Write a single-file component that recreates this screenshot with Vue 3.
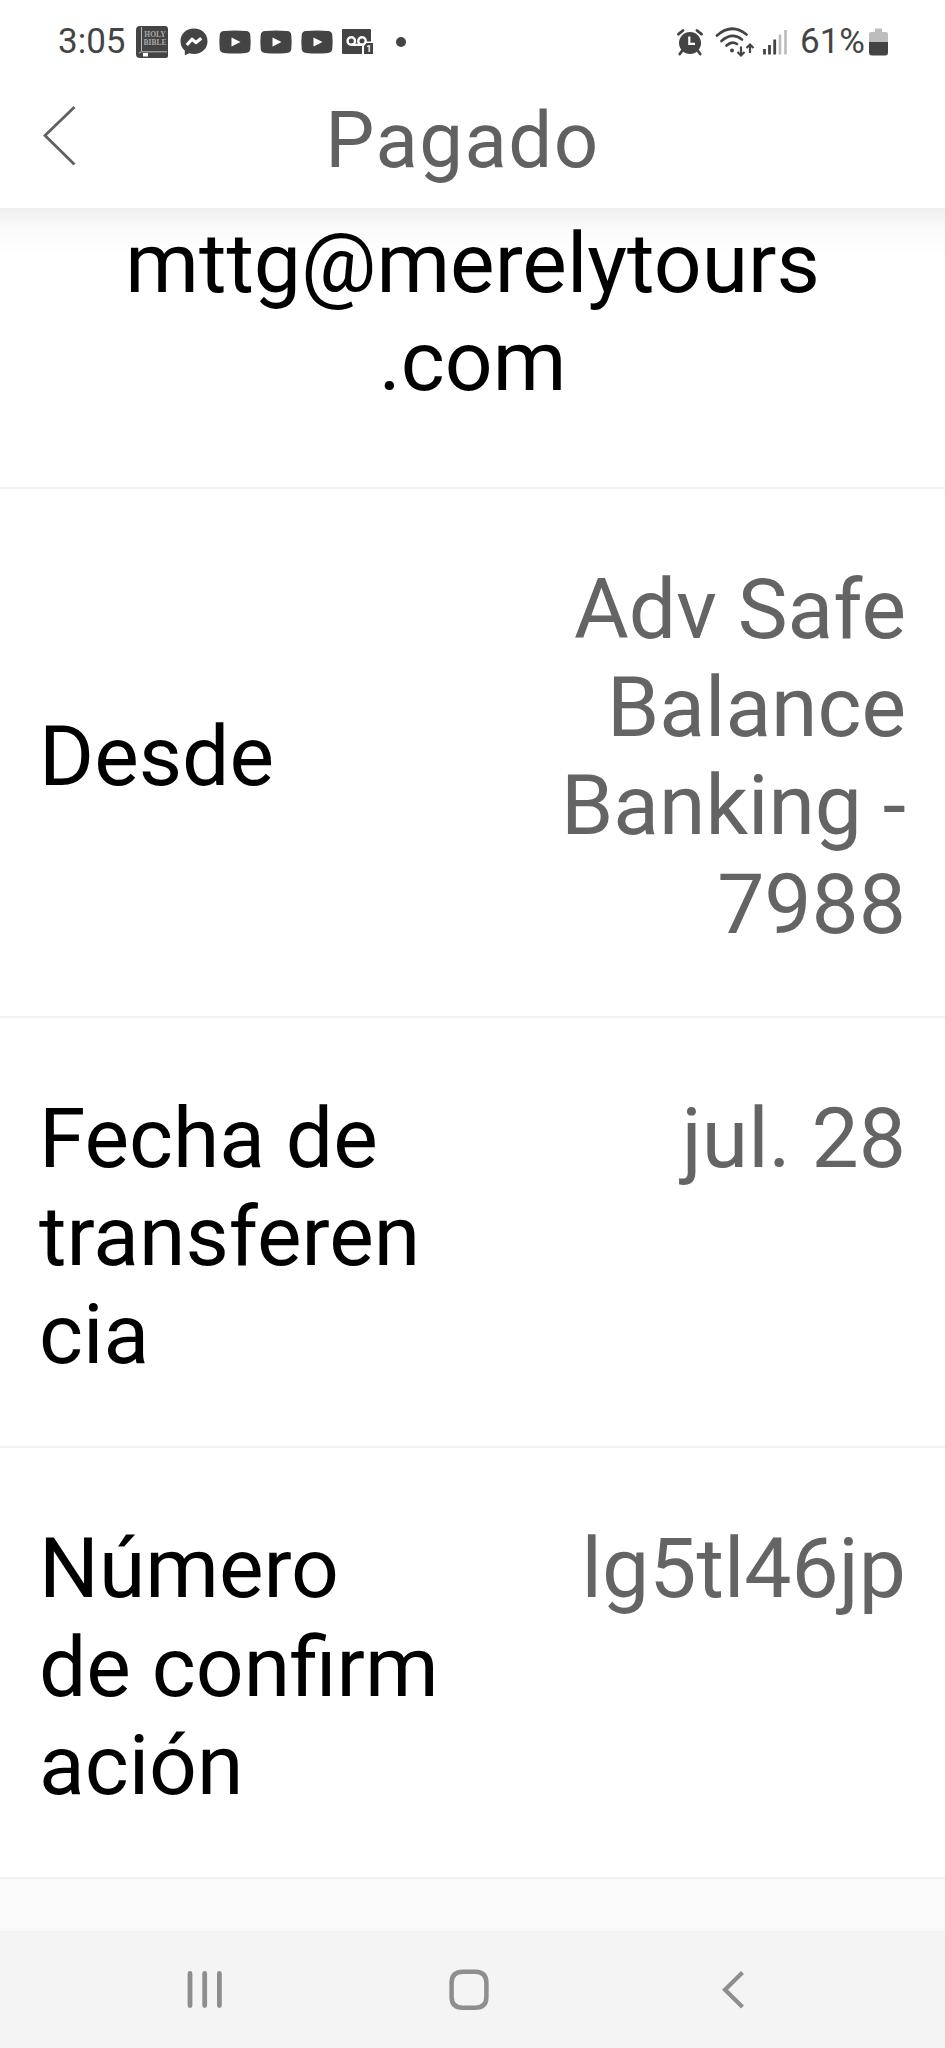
<template>
  <div class="phone">
    <div class="status-bar">
      <span class="clock">3:05</span>
      <div class="status-icons">
        <svg width="32" height="32" viewBox="0 0 32 32">
          <path d="M4 0H29Q32 0 32 3V30Q32 32 30 32H4Q0 32 0 28V4Q0 0 4 0Z" fill="#444" />
          <path d="M5.5 1V25M3 27.5Q3 25.8 6 25.8H31" fill="none" stroke="#bbb" stroke-width="1" />
          <rect x="7" y="27" width="5" height="3.5" fill="#fff" />
          <text x="19" y="11" class="bible-text">HOLY</text>
          <text x="19" y="18.5" class="bible-text">BIBLE</text>
        </svg>
        <svg class="messenger" width="28" height="28" viewBox="0 0 28 28">
          <path d="M14 0.5C6 0.5 0.5 6 0.5 13.2C0.5 17 2 20.2 4.8 22.5V27.2L9.3 25.2C10.8 25.6 12.4 25.9 14 25.9C22 25.9 27.5 20.4 27.5 13.2S22 0.5 14 0.5Z" fill="#444" />
          <path d="M6.8 17L12 11.2L16 14.6L21.3 10.2" fill="none" stroke="#fff" stroke-width="3.2" stroke-linejoin="round" />
        </svg>
        <svg v-for="n in 3" :key="n" class="youtube" width="32" height="24" viewBox="0 0 32 24">
          <path d="M5 1Q16 0 27 1Q31 1.3 31.3 5Q32 12 31.3 19Q31 22.6 27 23Q16 24 5 23Q1 22.6 0.7 19Q0 12 0.7 5Q1 1.3 5 1Z" fill="#444" />
          <path d="M12.5 7.5L21.5 12L12.5 16.5Z" fill="#fff" />
        </svg>
        <svg class="voicemail" width="32" height="26" viewBox="0 0 32 26">
          <rect width="29" height="25" rx="1" fill="#444" />
          <g fill="none" stroke="#fff" stroke-width="2.4">
            <circle cx="9.3" cy="12" r="3.7" />
            <circle cx="20" cy="12" r="3.7" />
            <path d="M9.5 15.8H20" />
          </g>
          <path d="M20 26V15.5L23 12.5H32V26Z" fill="#fff" />
          <path d="M22 25V17L24.5 14H31V25Z" fill="#444" />
          <text x="26.8" y="23.3" class="badge-text">1</text>
        </svg>
        <span class="dot"></span>
      </div>
      <div class="system-icons">
        <svg width="26" height="27" viewBox="0 0 26 27">
          <path d="M1.5 5.2L6 1.5M24.5 5.2L20 1.5M5 22L2.8 25M21 22L23.2 25" stroke="#444" stroke-width="2.8" stroke-linecap="round" />
          <circle cx="13" cy="14" r="11" fill="#444" />
          <path d="M12.3 7.5V14.8H18" fill="none" stroke="#fff" stroke-width="2.2" />
        </svg>
        <svg class="wifi" width="40" height="31" viewBox="0 0 40 31">
          <g fill="none" stroke="#444" stroke-width="2.7" stroke-linecap="round">
            <path d="M2 8.5Q16.5 -4.5 31.5 7.5" />
            <path d="M6.5 14Q17 4.5 27 12.5" />
            <path d="M11.5 18.5Q17 13.5 22 17" />
          </g>
          <circle cx="17" cy="23.5" r="2" fill="#444" />
          <path d="M26 19.5V28M22.5 25L26 28.5L29.5 25M35 26V18M31.5 21L35 17.5L38.5 21" fill="none" stroke="#444" stroke-width="2.2" />
        </svg>
        <svg class="signal" width="25" height="26" viewBox="0 0 25 26">
          <path d="M1.5 20V25.5M6.5 16V25.5M11.7 10.5V25.5" stroke="#444" stroke-width="2.8" />
          <path d="M17 5.5V25.5M22.5 1V25.5" stroke="#bbb" stroke-width="2.6" />
        </svg>
        <span class="percent">61%</span>
        <svg class="battery" width="19" height="28" viewBox="0 0 19 28">
          <path d="M6 0.5H13V4H17Q19 4 19 6V14H0V6Q0 4 2 4H6Z" fill="#bdbdbd" />
          <path d="M0 14H19V24.5Q19 27.5 16 27.5H3Q0 27.5 0 24.5Z" fill="#444" />
        </svg>
      </div>
    </div>

    <header class="header">
      <svg class="back" width="34" height="62" viewBox="0 0 34 62">
        <path d="M31.5 2L2 30.5L31.5 59.5" fill="none" stroke="#616161" stroke-width="2.8" />
      </svg>
      <h1 class="title">Pagado</h1>
    </header>

    <main class="content">
      <div class="email">mttg@merelytours<br />.com</div>
      <div class="row" v-for="r in rows" :key="r.label" :class="{ centered: r.centered }">
        <div class="label">{{ r.label }}</div>
        <div class="value">{{ r.value }}</div>
      </div>
    </main>

    <nav class="nav-bar">
      <svg width="35" height="42" viewBox="0 0 35 42">
        <path d="M3 4.5V36.5M17.7 4.5V36.5M32.4 4.5V36.5" stroke="#8e8e8e" stroke-width="4.8" stroke-linecap="round" />
      </svg>
      <svg class="home" width="40" height="42" viewBox="0 0 40 42">
        <path d="M14 2.8H26Q37.4 2.8 37.4 14V28Q37.4 38.8 26 38.8H14Q2.6 38.8 2.6 28V14Q2.6 2.8 14 2.8Z" fill="none" stroke="#8e8e8e" stroke-width="4.5" />
      </svg>
      <svg class="nav-back" width="23" height="42" viewBox="0 0 23 42">
        <path d="M20.5 3.5L3 20.7L20.5 38" fill="none" stroke="#8e8e8e" stroke-width="4.2" />
      </svg>
    </nav>
  </div>
</template>

<script setup>
const rows = [
  { label: 'Desde', value: 'Adv Safe\nBalance\nBanking -\n7988', centered: true },
  { label: 'Fecha de\ntransferen\ncia', value: 'jul. 28' },
  { label: 'Número\nde confirm\nación', value: 'lg5tl46jp' }
]
</script>

<style>
body {
  margin: 0;
  background: #fafafa;
}
</style>

<style scoped>
.phone {
  width: 945px;
  height: 2048px;
  display: flex;
  flex-direction: column;
  overflow: hidden;
  font-family: Roboto, 'Liberation Sans', sans-serif;
  background: #fafafa;
}
svg {
  display: block;
  flex: none;
}
.status-bar {
  height: 84px;
  box-sizing: border-box;
  padding: 0 57px 0 58px;
  display: flex;
  align-items: center;
  background: #fff;
  color: #444;
}
.clock,
.percent {
  font-size: 35px;
  line-height: 40px;
}
.clock {
  width: 78px;
}
.status-icons,
.system-icons {
  display: flex;
  align-items: center;
}
.system-icons {
  margin-left: auto;
}
.bible-text {
  font: 700 7.5px 'Liberation Serif', serif;
  fill: #aaa;
  text-anchor: middle;
}
.badge-text {
  font: 700 9px Roboto, sans-serif;
  fill: #fff;
  text-anchor: middle;
}
.messenger {
  margin-left: 12px;
  margin-right: 2px;
}
.youtube {
  margin-left: 9px;
}
.voicemail {
  margin-left: 9px;
}
.dot {
  width: 10px;
  height: 10px;
  margin-left: 22px;
  border-radius: 50%;
  background: #444;
}
.wifi {
  margin-left: 12px;
}
.signal {
  margin-left: 8px;
}
.percent {
  width: 67px;
  margin-left: 12px;
}
.battery {
  margin-left: 2px;
}
.header {
  position: relative;
  z-index: 1;
  height: 124px;
  flex: none;
  display: grid;
  grid-template-columns: 76px 1fr 96px;
  background: #fff;
}
/* soft steps of shade right under the header */
.header::after {
  content: '';
  position: absolute;
  left: 0;
  right: 0;
  top: 100%;
  height: 48px;
  background: linear-gradient(180deg, rgba(0, 0, 0, 0.06) 0, rgba(0, 0, 0, 0.04) 10px, rgba(0, 0, 0, 0.02) 20px, rgba(0, 0, 0, 0) 48px);
}
.back {
  margin: 21px 0 0 43px;
}
.title {
  margin: 11px 0 0;
  font-size: 78px;
  font-weight: 400;
  line-height: 91px;
  letter-spacing: 1.4px;
  color: #616161;
  text-align: center;
}
.content {
  background: #fff;
  font-size: 84px;
  line-height: 98.2px;
  color: #000;
}
.email {
  height: 281px;
  box-sizing: border-box;
  padding-top: 7px;
  text-align: center;
  border-bottom: 2px solid #f1f1f1;
}
.row {
  display: flex;
  justify-content: space-between;
  align-items: flex-start;
  padding: 72px 39px 62px 39px;
  border-bottom: 2px solid #f1f1f1;
}
.row.centered {
  align-items: center;
}
.label {
  white-space: pre-line;
}
.value {
  white-space: pre-line;
  text-align: right;
  color: #646464;
}
.nav-bar {
  height: 117px;
  flex: none;
  margin-top: auto;
  box-sizing: border-box;
  padding: 38px 200px 0 187px;
  display: flex;
  align-items: flex-start;
  background: #f4f4f4;
}
.home {
  margin-left: 227px;
}
.nav-back {
  margin-left: auto;
}
</style>
